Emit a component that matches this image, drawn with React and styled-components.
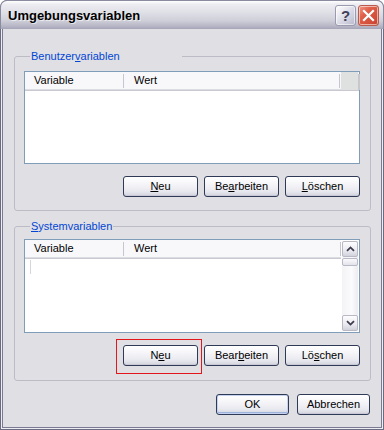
import React from "react";
import styled, { createGlobalStyle } from "styled-components";

const Global = createGlobalStyle`
  body {
    margin: 0;
    background: #ffffff;
    font-family: "Liberation Sans", Arial, sans-serif;
    font-size: 11px;
  }
`;

const Window = styled.div`
  width: 384px;
  height: 430px;
  box-sizing: border-box;
  display: flex;
  flex-direction: column;
  background: #6a6a82;
  border-radius: 7px 7px 0 0;
  overflow: hidden;
`;

const TitleBar = styled.div`
  height: 29px;
  flex-shrink: 0;
  display: flex;
  align-items: center;
  padding: 1px 4px 0 7px;
  box-sizing: border-box;
  border: 1px solid #8a8aa0;
  border-bottom: none;
  border-radius: 7px 7px 0 0;
  background: linear-gradient(
    to bottom,
    #ffffff 0%,
    #ececf1 12%,
    #e0e0e7 40%,
    #cfcfd9 70%,
    #b6b6c6 90%,
    #a4a4b8 100%
  );
`;

const TitleText = styled.div`
  flex: 1;
  font-family: "Liberation Sans", Arial, sans-serif;
  font-weight: bold;
  font-size: 13px;
  color: #000;
  text-shadow: 1px 1px 0 rgba(255, 255, 255, 0.6);
`;

const CaptionButton = styled.div`
  width: 21px;
  height: 21px;
  box-sizing: border-box;
  margin-left: 2px;
  border-radius: 3px;
  display: flex;
  align-items: center;
  justify-content: center;
  border: 1px solid ${(p) => (p.$close ? "#b85a4c" : "#9a9ab0")};
  background: ${(p) =>
    p.$close
      ? "linear-gradient(135deg, #f09a86 0%, #e0604a 35%, #c8422e 100%)"
      : "linear-gradient(135deg, #ffffff 0%, #e4e4ee 40%, #b8b8cc 100%)"};
  box-shadow: inset 0 0 0 1px rgba(255, 255, 255, 0.55);
  color: #41415a;
  font-weight: bold;
  font-size: 15px;
  font-family: "Liberation Sans", Arial, sans-serif;
`;

const Body = styled.div`
  flex: 1;
  margin: 0 1px 1px;
  padding: 0 1px 1px;
  background: #eeeef2;
  display: flex;
`;

const Content = styled.div`
  flex: 1;
  background: #e0dfe3;
  border: 1px solid #7a7a94;
  border-top: none;
  padding: 21px 10px 12px 11px;
  display: flex;
  flex-direction: column;
`;

const Group = styled.fieldset`
  margin: 0 0 ${(p) => p.$gap || 0}px;
  padding: 0 10px ${(p) => p.$bottom}px 9px;
  border: 1px solid #bdbcc6;
  border-radius: 3px;
  min-width: 0;
`;

const Legend = styled.legend`
  margin-left: 6px;
  padding: 0 1px;
  width: ${(p) => (p.$width ? `${p.$width}px` : "auto")};
  box-sizing: border-box;
  line-height: 13px;
  color: #0046d5;
  font-size: 11px;
`;

const U = styled.span`
  text-decoration: underline;
`;

const ListView = styled.div`
  height: ${(p) => p.$height}px;
  margin-top: ${(p) => p.$top}px;
  box-sizing: border-box;
  border: 1px solid #7f9db9;
  background: #ffffff;
  display: flex;
`;

const ListMain = styled.div`
  flex: 1;
  display: flex;
  flex-direction: column;
`;

const Header = styled.div`
  height: 17px;
  display: flex;
  align-items: center;
  background: #f8f8fb;
  border-bottom: 1px solid #dcdce3;
  box-shadow: 0 1px 0 #c9c9d2;
  margin-bottom: 1px;
  color: #000;
`;

const HeaderCell = styled.div`
  width: ${(p) => (p.$width ? `${p.$width}px` : "auto")};
  flex: ${(p) => (p.$width ? "none" : 1)};
  padding-left: ${(p) => p.$pad}px;
  box-sizing: border-box;
  line-height: 17px;
  white-space: nowrap;
`;

const Divider = styled.div`
  width: 1px;
  height: 14px;
  background: #c6c6cf;
`;

const HeaderCorner = styled.div`
  width: 17px;
  height: 18px;
  margin: 0 1px 0 1px;
  align-self: flex-start;
  background: #dfe1e1;
  box-shadow: 3px 1px 0 -1px #c8c8cc;
`;

const Rows = styled.div`
  flex: 1;
  padding-top: 1px;
`;

const Caret = styled.div`
  width: 1px;
  height: 14px;
  margin-left: 5px;
  background: #d6d6d6;
`;

const ScrollBar = styled.div`
  width: 16px;
  margin: 1px;
  display: flex;
  flex-direction: column;
  background: linear-gradient(to right, #f3f3f6, #fbfbfd 60%, #ececf0);
`;

const ScrollButton = styled.div`
  height: 16px;
  box-sizing: border-box;
  border: 1px solid #b9b9c6;
  border-radius: 2px;
  background: linear-gradient(to bottom, #fdfdfe, #eaeaf0 60%, #d2d2dc);
  display: flex;
  align-items: center;
  justify-content: center;
`;

const Thumb = styled.div`
  height: 8px;
  margin-top: 1px;
  box-sizing: border-box;
  border: 1px solid #b9b9c6;
  border-radius: 2px;
  background: linear-gradient(to bottom, #fbfbfd, #e2e2ea);
`;

const Track = styled.div`
  flex: 1;
`;

const ButtonRow = styled.div`
  display: flex;
  justify-content: flex-end;
  gap: 6px;
  margin-top: 12px;
`;

const DialogRow = styled.div`
  display: flex;
  justify-content: flex-end;
  gap: 8px;
  margin-top: 13px;
  padding-right: 1px;
`;

const Button = styled.div`
  width: ${(p) => p.$width || 75}px;
  height: 21px;
  box-sizing: border-box;
  border: 1px solid #2e3a56;
  border-radius: 3px;
  background: linear-gradient(
    to bottom,
    #ffffff 0%,
    #f6f6f9 35%,
    #e8e8ef 75%,
    #d3d3de 100%
  );
  box-shadow: ${(p) =>
    p.$default
      ? "inset 0 0 0 1px #c4d2f0, inset 0 -1px 0 1px #9fb2de"
      : "inset 0 -1px 0 #c9c9d6"};
  display: flex;
  align-items: center;
  justify-content: center;
  color: #000;
  font-size: 11px;
  line-height: 1;
  user-select: none;
`;

const Marked = styled.div`
  border: 1px solid #e3161c;
  padding: 5px 3px 7px 6px;
  margin: -6px -4px -8px -7px;
`;

const Chevron = ({ down }) => (
  <svg width="9" height="6" viewBox="0 0 9 6">
    <path
      d={down ? "M1 1.2 L4.5 4.6 L8 1.2" : "M1 4.8 L4.5 1.4 L8 4.8"}
      fill="none"
      stroke="#3c3c4e"
      strokeWidth="1.8"
    />
  </svg>
);

const CloseX = () => (
  <svg width="13" height="13" viewBox="0 0 13 13">
    <path
      d="M2 2 L11 11 M11 2 L2 11"
      stroke="#ffffff"
      strokeWidth="2.2"
      strokeLinecap="square"
    />
  </svg>
);

function ListHeader({ corner }) {
  return (
    <Header>
      <HeaderCell $width={98} $pad={9}>
        Variable
      </HeaderCell>
      <Divider />
      <HeaderCell $pad={10}>Wert</HeaderCell>
      <Divider />
      {corner && <HeaderCorner />}
    </Header>
  );
}

export default function App() {
  return (
    <>
      <Global />
      <Window>
        <TitleBar>
          <TitleText>Umgebungsvariablen</TitleText>
          <CaptionButton>?</CaptionButton>
          <CaptionButton $close>
            <CloseX />
          </CaptionButton>
        </TitleBar>
        <Body>
          <Content>
            <Group $bottom={13} $gap={9}>
              <Legend $width={152}>
                Benutzer<U>v</U>ariablen
              </Legend>
              <ListView $height={93} $top={8}>
                <ListMain>
                  <ListHeader corner />
                  <Rows />
                </ListMain>
              </ListView>
              <ButtonRow>
                <Button>
                  <span>
                    <U>N</U>eu
                  </span>
                </Button>
                <Button>
                  <span>
                    Be<U>a</U>rbeiten
                  </span>
                </Button>
                <Button>
                  <span>
                    <U>L</U>öschen
                  </span>
                </Button>
              </ButtonRow>
            </Group>

            <Group $bottom={14}>
              <Legend>
                <U>S</U>ystemvariablen
              </Legend>
              <ListView $height={94} $top={6}>
                <ListMain>
                  <ListHeader />
                  <Rows>
                    <Caret />
                  </Rows>
                </ListMain>
                <ScrollBar>
                  <ScrollButton>
                    <Chevron />
                  </ScrollButton>
                  <Thumb />
                  <Track />
                  <ScrollButton>
                    <Chevron down />
                  </ScrollButton>
                </ScrollBar>
              </ListView>
              <ButtonRow>
                <Marked>
                  <Button>
                    <span>
                      N<U>e</U>u
                    </span>
                  </Button>
                </Marked>
                <Button>
                  <span>
                    Bear<U>b</U>eiten
                  </span>
                </Button>
                <Button>
                  <span>
                    Lö<U>s</U>chen
                  </span>
                </Button>
              </ButtonRow>
            </Group>

            <DialogRow>
              <Button $default $width={73}>
                OK
              </Button>
              <Button $width={73}>Abbrechen</Button>
            </DialogRow>
          </Content>
        </Body>
      </Window>
    </>
  );
}
